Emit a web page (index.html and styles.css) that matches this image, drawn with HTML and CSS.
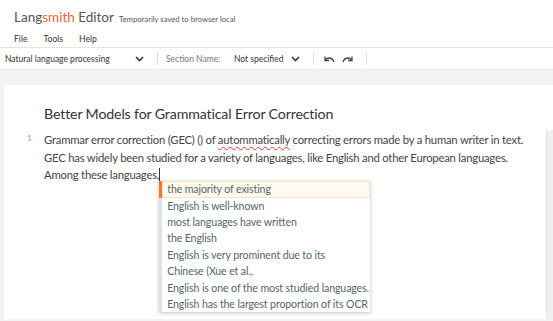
FILE: index.html
```html
<!DOCTYPE html>
<html lang="en">
<head>
    <meta charset="UTF-8">
    <title>Langsmith Editor</title>
    <link rel="stylesheet" href="styles.css">
</head>
<body>
    <header class="topbar">
        <div class="brand">
            <span class="logo">Lang<span class="accent">smith</span> Editor</span>
            <span class="note">Temporarily saved to browser local</span>
        </div>
        <nav class="menu">
            <span>File</span>
            <span>Tools</span>
            <span>Help</span>
        </nav>
    </header>

    <!-- Toolbar -->
    <div class="toolbar">
        <div class="select domain">
            <span>Natural language processing</span>
            <svg class="chev" width="9" height="6" viewBox="0 0 9 6"><path d="M1 1l3.5 3.5L8 1" fill="none" stroke="#333" stroke-width="1.6"/></svg>
        </div>
        <div class="sep"></div>
        <span class="label">Section Name:</span>
        <div class="select section">
            <span>Not specified</span>
            <svg class="chev" width="9" height="6" viewBox="0 0 9 6"><path d="M1 1l3.5 3.5L8 1" fill="none" stroke="#333" stroke-width="1.6"/></svg>
        </div>
        <div class="sep"></div>
        <div class="history">
            <svg width="11" height="8" viewBox="0 0 11 8"><path d="M10 7C9 4 7 3 5 3S2 4 1.5 5" fill="none" stroke="#444" stroke-width="1.3"/><path d="M1 1.5v4h4" fill="none" stroke="#444" stroke-width="1.3"/></svg>
            <svg width="11" height="8" viewBox="0 0 11 8"><path d="M1 7C2 4 4 3 6 3s3 1 3.5 2" fill="none" stroke="#444" stroke-width="1.3"/><path d="M10 1.5v4H6" fill="none" stroke="#444" stroke-width="1.3"/></svg>
        </div>
        <div class="sep"></div>
    </div>

    <main class="workspace">
        <div class="page">
            <div class="doc">
                <h1>Better Models for Grammatical Error Correction</h1>
                <div class="para">
                    <span class="gutter">1</span>
                    <div class="text">Grammar error correction (GEC) () of <span class="typo">autommatically</span> correcting errors made by a human writer in text. GEC has widely been studied for a variety of languages, like English and other European languages. Among these languages,<span class="caret"><span class="suggest">
                        <span class="item active">the majority of existing</span>
                        <span class="item">English is well-known</span>
                        <span class="item">most languages have written</span>
                        <span class="item">the English</span>
                        <span class="item">English is very prominent due to its</span>
                        <span class="item">Chinese (Xue et al.,</span>
                        <span class="item">English is one of the most studied languages.</span>
                        <span class="item">English has the largest proportion of its OCR</span>
                    </span></span></div>
                </div>
            </div>
            <div class="side"></div>
        </div>
    </main>
</body>
</html>
```

FILE: styles.css
```css
body {
    margin: 0;
    background-color: #f3f3f3;
    font-family: "Lato", Arial, sans-serif;
    color: #444;
    height: 321px;
    display: flex;
    flex-direction: column;
    overflow: hidden;
}
.topbar {
    flex: none;
    background-color: #fff;
    padding: 9px 14px 0;
    height: 38px;
    border-bottom: 1px solid #e6e6e6;
}
.brand {
    display: flex;
    align-items: baseline;
    gap: 5px;
    height: 19px;
}
.logo {
    font-size: 13.5px;
    color: #555;
}
.logo .accent {
    color: #f0643c;
}
.note {
    font-size: 7.7px;
    color: #555;
}
.menu {
    display: flex;
    gap: 16px;
    margin-top: 6px;
    font-size: 8.6px;
    color: #333;
}
.toolbar {
    flex: none;
    background-color: #fff;
    height: 21px;
    display: flex;
    align-items: center;
    padding-left: 5px;
    font-size: 8.5px;
    color: #333;
    border-bottom: 1px solid #ececec;
}
.select {
    display: flex;
    align-items: center;
    justify-content: space-between;
}
.domain {
    width: 139px;
}
.section {
    width: 66px;
    margin-left: 11px;
}
.sep {
    width: 1px;
    height: 13px;
    background-color: #eed7d0;
    margin: 0 8px 0 13px;
}
.label {
    color: #777;
    width: 57px;
}
.history {
    display: flex;
    gap: 7px;
    padding-left: 2px;
}
.workspace {
    flex: 1;
    padding: 15px 0 2px 4px;
    display: flex;
}
.page {
    flex: 1;
    background-color: #fff;
    display: flex;
}
.doc {
    flex: 1;
    padding: 20px 0 0 23px;
}
.side {
    width: 6px;
    margin-top: 45px;
    background-color: #f0f0f0;
    border-left: 1px solid #e2e2e2;
}
h1 {
    margin: 0 0 9px 17px;
    font-size: 14.2px;
    letter-spacing: -0.15px;
    font-weight: normal;
    color: #333;
}
.para {
    display: flex;
}
.gutter {
    width: 17px;
    font-size: 8px;
    color: #999;
    padding-top: 2px;
}
.text {
    width: 486px;
    font-size: 11.3px;
    letter-spacing: -0.22px;
    line-height: 17.6px;
    color: #444;
}
.typo {
    text-decoration: underline wavy #e23b3b;
    text-decoration-thickness: 1px;
    text-underline-offset: 2px;
}
.caret {
    position: relative;
    border-left: 1px solid #333;
}
.suggest {
    position: absolute;
    top: 13px;
    left: -1px;
    width: 211px;
    background-color: #fff;
    box-shadow: 0 1px 4px rgba(0, 0, 0, 0.25);
    font-size: 10.6px;
    letter-spacing: -0.12px;
    line-height: 16.4px;
    color: #566;
}
.item {
    display: block;
    border-left: 3px solid #dde2ee;
    padding-left: 5px;
    white-space: nowrap;
}
.item.active {
    border-left-color: #f07a28;
    background-color: #fffaf0;
    box-shadow: inset 0 0 0 1px #fbe3c4;
}
```
